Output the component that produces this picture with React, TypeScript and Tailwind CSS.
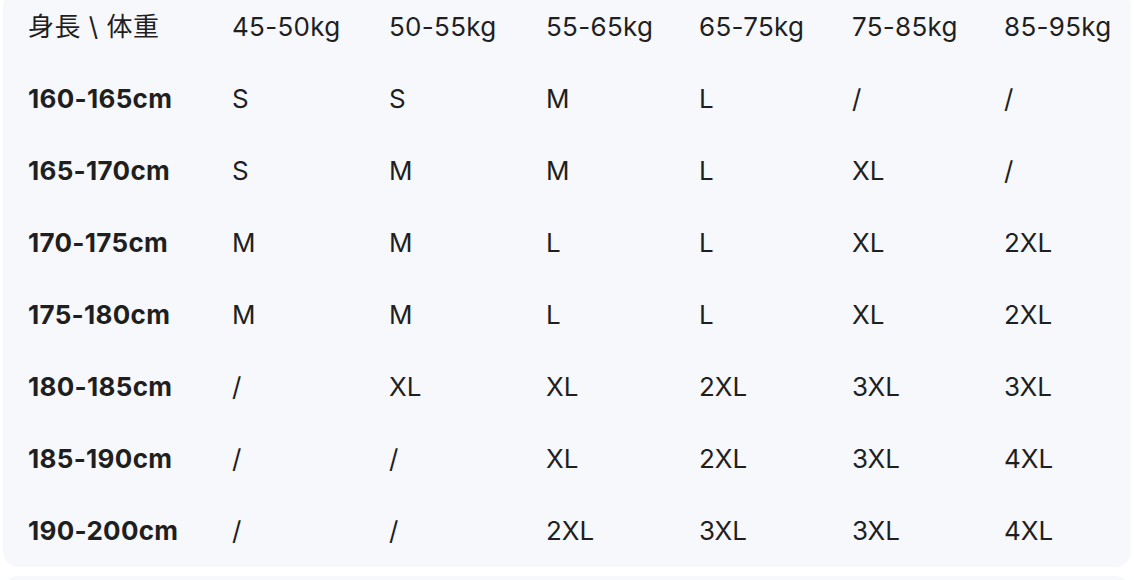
import React from "react";

const headers = ["45-50kg", "50-55kg", "55-65kg", "65-75kg", "75-85kg", "85-95kg"];
const rows: [string, string[]][] = [
  ["160-165cm", ["S", "S", "M", "L", "/", "/"]],
  ["165-170cm", ["S", "M", "M", "L", "XL", "/"]],
  ["170-175cm", ["M", "M", "L", "L", "XL", "2XL"]],
  ["175-180cm", ["M", "M", "L", "L", "XL", "2XL"]],
  ["180-185cm", ["/", "XL", "XL", "2XL", "3XL", "3XL"]],
  ["185-190cm", ["/", "/", "XL", "2XL", "3XL", "4XL"]],
  ["190-200cm", ["/", "/", "2XL", "3XL", "3XL", "4XL"]],
];

const cols = "grid grid-cols-[204px_157px_157px_153px_153px_152px_1fr] items-center h-[72px]";

export default function App() {
  return (
    <div className="w-[1134px] h-[580px] overflow-hidden bg-white" style={{ fontFamily: "Inter, 'Noto Sans CJK JP', sans-serif" }}>
      <div className="mx-[3px] -mt-[10px] h-[577px] rounded-[16px] bg-[#f7f8fc] pl-[25px] text-[#1f1f1f] text-[26px]">
        <div className={cols}>
          <div className="tracking-[0.5px]">身長 \ 体重</div>
          {headers.map((h) => (
            <div key={h} className="tracking-[0.3px]">{h}</div>
          ))}
        </div>
        {rows.map(([label, vals]) => (
          <div key={label} className={cols}>
            <div className="font-bold tracking-[0.3px]">{label}</div>
            {vals.map((v, i) => (
              <div key={i}>{v}</div>
            ))}
          </div>
        ))}
      </div>
      <div className="mx-[3px] mt-[9px] h-[40px] rounded-[16px] bg-[#f7f8fc]" />
    </div>
  );
}
